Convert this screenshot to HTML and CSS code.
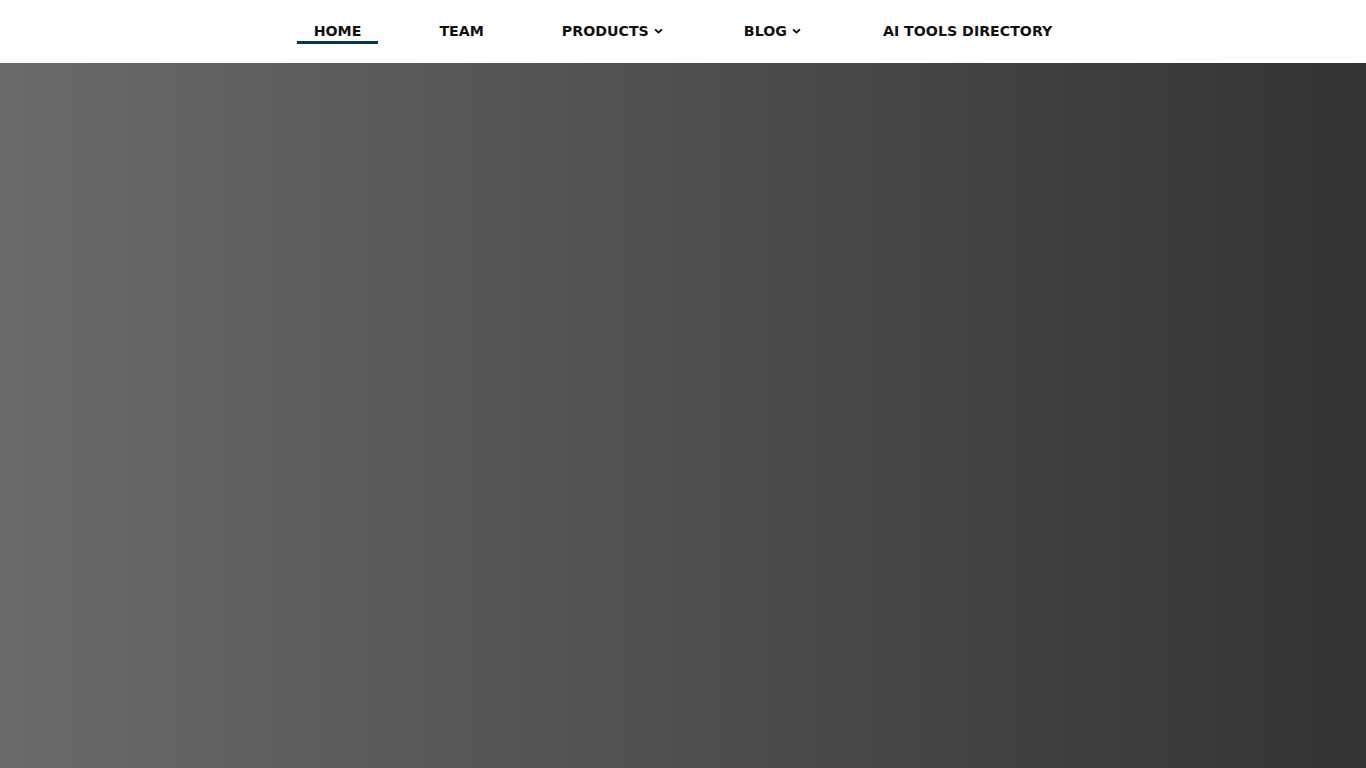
FILE: index.html
```html
<!DOCTYPE html>
<html lang="en">
<head>
<meta charset="utf-8">
<title>Home</title>
<link rel="stylesheet" href="styles.css">
</head>
<body>
<header class="site-header">
  <nav class="main-nav">
    <a class="nav-link active" href="#">HOME</a>
    <a class="nav-link" href="#">TEAM</a>
    <a class="nav-link dropdown" href="#">PRODUCTS<svg class="chev" viewBox="0 0 10 6" width="9" height="6"><path d="M1.2 1.2 L5 4.8 L8.8 1.2" fill="none" stroke="#000" stroke-width="2"/></svg></a>
    <a class="nav-link dropdown" href="#">BLOG<svg class="chev" viewBox="0 0 10 6" width="9" height="6"><path d="M1.2 1.2 L5 4.8 L8.8 1.2" fill="none" stroke="#000" stroke-width="2"/></svg></a>
    <a class="nav-link" href="#">AI TOOLS DIRECTORY</a>
  </nav>
</header>
<main class="hero"></main>
</body>
</html>
```
FILE: styles.css
```css
* { box-sizing: border-box; }
html, body { margin: 0; padding: 0; height: 100%; }
body {
  font-family: "DejaVu Sans", "Open Sans", sans-serif;
  background: #fff;
  display: flex;
  flex-direction: column;
  overflow: hidden;
}
.site-header {
  height: 63px;
  background: #fff;
  display: flex;
  justify-content: center;
  align-items: center;
  flex: none;
}
.main-nav {
  display: flex;
  align-items: center;
  gap: 44px;
}
.nav-link {
  position: relative;
  display: flex;
  align-items: center;
  padding: 0 17px 2px;
  height: 63px;
  color: #111;
  text-decoration: none;
  font-size: 14.2px;
  font-weight: 700;
  letter-spacing: 0;
}
.nav-link.active::after {
  content: "";
  position: absolute;
  left: 0;
  right: 0;
  top: 41px;
  height: 3px;
  background: #083a4d;
}
.chev { margin-left: 5px; margin-top: 1px; }
.dropdown + .dropdown { margin-left: 3px; }
.dropdown + .nav-link:not(.dropdown) { margin-left: 4px; }
.hero {
  flex: 1;
  background: linear-gradient(to right, #6a6a6a 0%, #333333 100%);
}
```
